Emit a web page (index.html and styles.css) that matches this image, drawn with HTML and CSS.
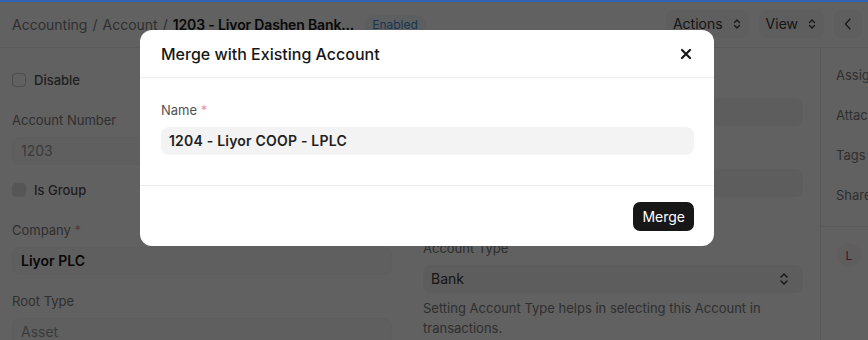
FILE: index.html
```html
<!DOCTYPE html>
<html lang="en">
<head>
    <meta charset="UTF-8">
    <meta name="viewport" content="width=device-width, initial-scale=1.0">
    <title>1203 - Liyor Dashen Bank - Account</title>
    <link rel="stylesheet" href="styles.css">
</head>
<body>
    <header class="page-head">
        <div class="title-area">
            <span class="crumb">Accounting</span>
            <span class="sep">/</span>
            <span class="crumb">Account</span>
            <span class="sep">/</span>
            <span class="title">1203 - Liyor Dashen Bank...</span>
            <span class="pill">Enabled</span>
        </div>
        <div class="actions">
            <button class="btn">Actions
                <svg class="sort" width="8" height="10" viewBox="0 0 8 10"><path d="M1.5 3.5L4 1l2.5 2.5M1.5 6.5L4 9l2.5-2.5" fill="none" stroke="currentColor" stroke-width="1.3" stroke-linecap="round" stroke-linejoin="round"/></svg>
            </button>
            <button class="btn">View
                <svg class="sort" width="8" height="10" viewBox="0 0 8 10"><path d="M1.5 3.5L4 1l2.5 2.5M1.5 6.5L4 9l2.5-2.5" fill="none" stroke="currentColor" stroke-width="1.3" stroke-linecap="round" stroke-linejoin="round"/></svg>
            </button>
            <button class="btn btn-icon">
                <svg width="8" height="12" viewBox="0 0 8 12"><path d="M6 1L1.5 6 6 11" fill="none" stroke="currentColor" stroke-width="1.2" stroke-linecap="round" stroke-linejoin="round"/></svg>
            </button>
        </div>
    </header>

    <div class="layout">
        <main class="form">
            <div class="column">
                <label class="check"><span class="box"></span>Disable</label>
                <div class="field">
                    <div class="label">Account Number</div>
                    <div class="control muted">1203</div>
                </div>
                <label class="check"><span class="box disabled"></span>Is Group</label>
                <div class="field">
                    <div class="label">Company <span class="req">*</span></div>
                    <div class="control bold">Liyor PLC</div>
                </div>
                <div class="field">
                    <div class="label">Root Type</div>
                    <div class="control muted">Asset</div>
                </div>
            </div>
            <div class="column">
                <div class="field">
                    <div class="label">Parent Account <span class="req">*</span></div>
                    <div class="control">Bank Accounts - LPLC</div>
                </div>
                <div class="field spaced">
                    <div class="label">Account Currency</div>
                    <div class="control">ETB</div>
                </div>
                <div class="field">
                    <div class="label">Account Type</div>
                    <div class="control select">Bank
                        <svg width="10" height="14" viewBox="0 0 10 14"><path d="M2 5l3-3 3 3M2 9l3 3 3-3" fill="none" stroke="currentColor" stroke-width="1.4" stroke-linecap="round" stroke-linejoin="round"/></svg>
                    </div>
                    <p class="help">Setting Account Type helps in selecting this Account in transactions.</p>
                </div>
            </div>
        </main>
        <aside class="sidebar">
            <div class="side-item">Assigned To</div>
            <div class="side-item">Attachments</div>
            <div class="side-item">Tags</div>
            <div class="side-item">Shared With</div>
            <div class="side-sep"></div>
            <div class="avatar">L</div>
        </aside>
    </div>

    <div class="backdrop">
        <div class="progress"></div>
        <div class="modal">
            <div class="modal-header">
                <h4>Merge with Existing Account</h4>
                <button class="close">
                    <svg width="12" height="12" viewBox="0 0 12 12"><path d="M2 2l8 8M10 2l-8 8" fill="none" stroke="currentColor" stroke-width="2.2" stroke-linecap="round"/></svg>
                </button>
            </div>
            <div class="modal-body">
                <div class="label">Name <span class="req">*</span></div>
                <div class="modal-input">1204 - Liyor COOP - LPLC</div>
            </div>
            <div class="modal-footer">
                <button class="btn-primary">Merge</button>
            </div>
        </div>
    </div>
</body>
</html>
```

FILE: styles.css
```css
:root {
    --text: #383838;
    --text-dark: #171717;
    --muted: #7c7c7c;
    --control-bg: #f3f3f3;
    --border: #ededed;
    --red: #e24c4c;
}

* {
    box-sizing: border-box;
    margin: 0;
    padding: 0;
}

body {
    font-family: Inter, "Noto Sans", sans-serif;
    background: white;
    color: var(--text);
    font-size: 13px;
    overflow: hidden;
}

button {
    font-family: inherit;
    border: none;
    cursor: pointer;
}

/* page head */
.page-head {
    height: 48px;
    border-bottom: 1px solid var(--border);
    display: flex;
    align-items: center;
    justify-content: space-between;
    padding: 2px 6px 0 12px;
}

.title-area {
    display: flex;
    align-items: center;
    gap: 5px;
    font-size: 14px;
    color: var(--muted);
}

.title {
    color: var(--text-dark);
    font-weight: 600;
    letter-spacing: -0.15px;
}

.pill {
    margin-left: 5px;
    font-size: 12px;
    color: #3b8fd6;
    background: #f3f8fd;
    border-radius: 10px;
    padding: 2px 8px;
}

.actions {
    display: flex;
    gap: 10px;
    margin-top: -2px;
}

.btn {
    height: 28px;
    padding: 0 8px 0 7px;
    border-radius: 8px;
    background: #f7f7f7;
    color: var(--text);
    font-size: 14px;
    display: flex;
    align-items: center;
    gap: 7px;
}

.btn .sort {
    margin-left: 3px;
}

.btn-icon {
    width: 28px;
    justify-content: center;
    padding: 0;
}

/* form */
.layout {
    display: flex;
}

.form {
    width: 821px;
    border-right: 1px solid var(--border);
    padding: 24px 17px 0 12px;
    display: grid;
    grid-template-columns: 1fr 1fr;
    gap: 31px;
}

.check {
    display: flex;
    align-items: center;
    gap: 8px;
    height: 16px;
    margin-bottom: 23px;
    font-weight: 500;
    color: #525252;
}

.box {
    width: 14px;
    height: 14px;
    border: 1px solid #c7c7c7;
    border-radius: 4px;
    background: white;
}

.box.disabled {
    background: #e2e2e2;
    border-color: #e2e2e2;
}

.field {
    margin-bottom: 17px;
}

.field.spaced {
    margin-bottom: 42px;
}

.label {
    font-size: 13px;
    line-height: 18px;
    margin-bottom: 8px;
    color: var(--muted);
}

.req {
    color: var(--red);
    opacity: 0.6;
}

.control {
    height: 28px;
    line-height: 28px;
    padding: 0 8px;
    border-radius: 8px;
    background: var(--control-bg);
    font-size: 14px;
    color: var(--text);
}

.control.muted {
    color: #999;
    background: #fafafa;
    border: 1px solid #f3f3f3;
    line-height: 26px;
}

.control.bold {
    font-weight: 600;
    color: var(--text-dark);
    background: #fafafa;
    border: 1px solid #f3f3f3;
    line-height: 26px;
}

.control.select {
    display: flex;
    align-items: center;
    justify-content: space-between;
    padding-right: 14px;
}

.help {
    margin-top: 5px;
    line-height: 20px;
    color: var(--muted);
}

/* sidebar */
.sidebar {
    padding: 18px 0 0 15px;
    flex: 1;
    white-space: nowrap;
    overflow: hidden;
}

.side-item {
    line-height: 18px;
    margin-bottom: 22px;
    color: var(--muted);
}

.side-sep {
    border-top: 1px solid var(--border);
    margin: 2px -15px 16px;
}

.avatar {
    width: 24px;
    height: 24px;
    margin-left: 1px;
    border-radius: 50%;
    background: #fdf3f8;
    color: #c0297b;
    font-size: 12px;
    display: flex;
    align-items: center;
    justify-content: center;
}

/* modal */
.backdrop {
    position: fixed;
    inset: 0;
    background: rgba(0, 0, 0, 0.62);
    padding: 30px 0 0 140px;
}

.progress {
    position: absolute;
    top: 0;
    left: 0;
    right: 0;
    height: 2px;
    background: #2f63b1;
}

.modal {
    width: 574px;
    background: white;
    border-radius: 12px;
    color: var(--text-dark);
}

.modal-header {
    height: 48px;
    border-bottom: 1px solid var(--border);
    display: flex;
    align-items: center;
    justify-content: space-between;
    padding: 0 22px 0 21px;
}

.modal-header h4 {
    font-size: 16px;
    font-weight: 500;
}

.close {
    background: none;
    color: var(--text-dark);
    display: flex;
}

.modal-body {
    padding: 23px 20px 30px 21px;
    border-bottom: 1px solid var(--border);
}

.modal-body .label {
    color: #525252;
}

.modal-input {
    height: 28px;
    line-height: 28px;
    padding: 0 8px;
    border-radius: 8px;
    background: var(--control-bg);
    font-size: 14px;
    font-weight: 600;
    letter-spacing: 0.2px;
    color: #1f1f1f;
}

.modal-footer {
    height: 60px;
    display: flex;
    align-items: center;
    justify-content: flex-end;
    padding: 0 20px;
}

.btn-primary {
    height: 29px;
    padding: 0 9px;
    border-radius: 7px;
    background: var(--text-dark);
    color: white;
    font-size: 14px;
}
```
